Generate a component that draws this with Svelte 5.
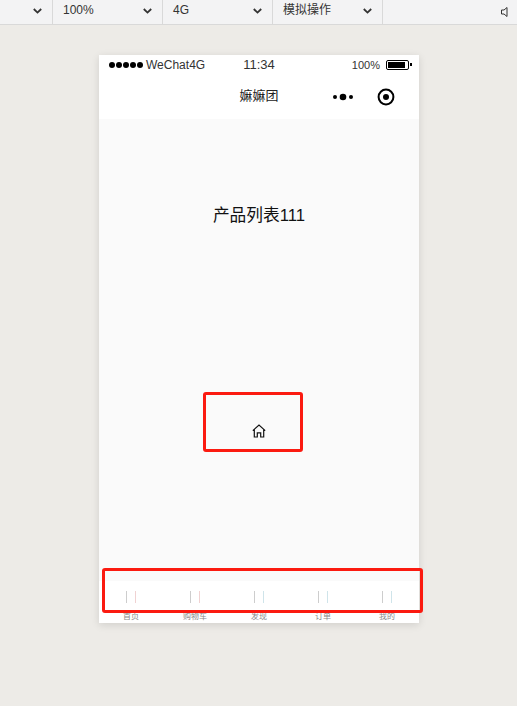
<script>
    const toolbar = [
        { label: "", width: 53 },
        { label: "100%", width: 110 },
        { label: "4G", width: 110 },
        { label: "模拟操作", width: 110 }
    ];
    const tabs = [
        { label: "首页", tint: "#f0d2d2" },
        { label: "购物车", tint: "#f0d2d2" },
        { label: "发现", tint: "#cfe4ea" },
        { label: "订单", tint: "#cfe4ea" },
        { label: "我的", tint: "#cfe4ea" }
    ];
</script>

<div class="page">
    <div class="toolbar">
        {#each toolbar as item}
            <div class="select" style="width: {item.width}px">
                <span class="select-label">{item.label}</span>
                <svg class="chevron" width="9" height="6" viewBox="0 0 9 6">
                    <path d="M0.8 1 L4.5 4.6 L8.2 1" fill="none" stroke="#333" stroke-width="1.8" />
                </svg>
            </div>
        {/each}
        <svg class="sound" width="7" height="10" viewBox="0 0 7 10">
            <path d="M0.5 3 H3 L6 0.5 V9.5 L3 7 H0.5 Z" fill="none" stroke="#333" />
        </svg>
    </div>

    <div class="phone">
        <div class="status">
            <div class="status-left">
                <span class="dots">
                    <i></i><i></i><i></i><i></i><i></i>
                </span>
                <span>WeChat4G</span>
            </div>
            <div class="time">11:34</div>
            <div class="status-right">
                <span>100%</span>
                <span class="battery"><b></b></span>
            </div>
        </div>

        <div class="nav">
            <span class="title">嫲嫲团</span>
            <div class="capsule">
                <svg width="24" height="8" viewBox="0 0 24 8">
                    <circle cx="3" cy="4" r="2" />
                    <circle cx="11" cy="4" r="3.3" />
                    <circle cx="19" cy="4" r="2" />
                </svg>
                <svg width="18" height="18" viewBox="0 0 18 18">
                    <circle cx="9" cy="9" r="7.4" fill="none" stroke="#000" stroke-width="2" />
                    <circle cx="9" cy="9" r="3" />
                </svg>
            </div>
        </div>

        <div class="content">
            <div class="heading">产品列表111</div>
            <div class="icon-row">
                <svg width="14" height="14" viewBox="0 0 14 14">
                    <path d="M0.8 6.6 L7 1 L13.2 6.6 M2.3 5.6 V13 H5.3 V8.8 H8.7 V13 H11.7 V5.6" fill="none" stroke="#111" stroke-width="1.2" />
                </svg>
            </div>
        </div>

        <div class="tabbar">
            {#each tabs as tab}
                <div class="tab">
                    <div class="tab-icon" style="border-right-color: {tab.tint}"></div>
                    <div class="tab-label">{tab.label}</div>
                </div>
            {/each}
        </div>
    </div>

    <div class="mark mark-icon"></div>
    <div class="mark mark-tabs"></div>
</div>

<style>
    :global(body) {
        margin: 0;
        background-color: #edebe7;
    }

    .page {
        position: relative;
        width: 517px;
        height: 706px;
        overflow: hidden;
        background-color: #edebe7;
        font-family: "Liberation Sans", "Noto Sans CJK SC", sans-serif;
    }

    .toolbar {
        display: flex;
        height: 24px;
        background-color: #f3f3f4;
        border-bottom: 1px solid #d9d9d9;
        font-size: 12px;
        color: #333;
    }

    .select {
        display: flex;
        align-items: center;
        justify-content: space-between;
        box-sizing: border-box;
        padding: 0 10px 4px 10px;
        border-right: 1px solid #d9d9d9;
    }

    .select-label {
        line-height: 14px;
        margin-top: -1px;
    }

    .chevron {
        margin-top: 2px;
    }

    .sound {
        margin: 7px 0 0 118px;
    }

    .phone {
        display: flex;
        flex-direction: column;
        width: 320px;
        height: 568px;
        margin: 30px 0 0 99px;
        background-color: #fff;
        box-shadow: 0 2px 8px rgba(0, 0, 0, 0.12);
    }

    .status {
        display: grid;
        grid-template-columns: 1fr 1fr 1fr;
        align-items: center;
        height: 20px;
        color: #333;
    }

    .status-left {
        display: flex;
        align-items: center;
        gap: 3px;
        padding-left: 10px;
        font-size: 12px;
    }

    .dots {
        display: flex;
        gap: 1px;
    }

    .dots i {
        width: 6px;
        height: 6px;
        border-radius: 50%;
        background-color: #000;
    }

    .time {
        margin-top: -2px;
        text-align: center;
        font-size: 13px;
    }

    .status-right {
        display: flex;
        align-items: center;
        justify-content: flex-end;
        gap: 6px;
        padding-right: 10px;
        font-size: 11px;
    }

    .battery {
        position: relative;
        box-sizing: border-box;
        width: 23px;
        height: 10px;
        padding: 1px;
        border: 1px solid #000;
        border-radius: 2px;
    }

    .battery b {
        display: block;
        width: 17px;
        height: 6px;
        background-color: #000;
    }

    .battery::after {
        content: "";
        position: absolute;
        top: 1.5px;
        right: -4px;
        width: 2px;
        height: 3px;
        background-color: #000;
    }

    .nav {
        position: relative;
        display: flex;
        align-items: center;
        justify-content: center;
        height: 44px;
    }

    .title {
        font-size: 13px;
        line-height: 16px;
        margin-top: -2px;
        color: #222;
    }

    .capsule {
        position: absolute;
        right: 24px;
        top: 13px;
        display: flex;
        align-items: center;
        gap: 21px;
    }

    .content {
        flex: 1;
        display: flex;
        flex-direction: column;
        align-items: center;
        background-color: #fafafa;
    }

    .heading {
        margin-top: 87px;
        font-size: 16.7px;
        line-height: 20px;
        color: #111;
    }

    .icon-row {
        margin-top: 198px;
        height: 14px;
    }

    .tabbar {
        display: flex;
        height: 42px;
        background-color: #fff;
    }

    .tab {
        flex: 1;
        display: flex;
        flex-direction: column;
        align-items: center;
    }

    .tab-icon {
        box-sizing: border-box;
        width: 10px;
        height: 12px;
        margin-top: 10px;
        border-left: 1px solid #cdcdcd;
        border-right: 1px solid #cfe4ea;
    }

    .tab-label {
        margin-top: 9px;
        font-size: 8px;
        line-height: 10px;
        color: #8a8a8a;
    }

    .mark {
        position: absolute;
        box-sizing: border-box;
        border: 3px solid #fb1a10;
        border-radius: 3px;
    }

    .mark-icon {
        left: 203px;
        top: 392px;
        width: 100px;
        height: 60px;
    }

    .mark-tabs {
        left: 102px;
        top: 568px;
        width: 321px;
        height: 45px;
    }
</style>
